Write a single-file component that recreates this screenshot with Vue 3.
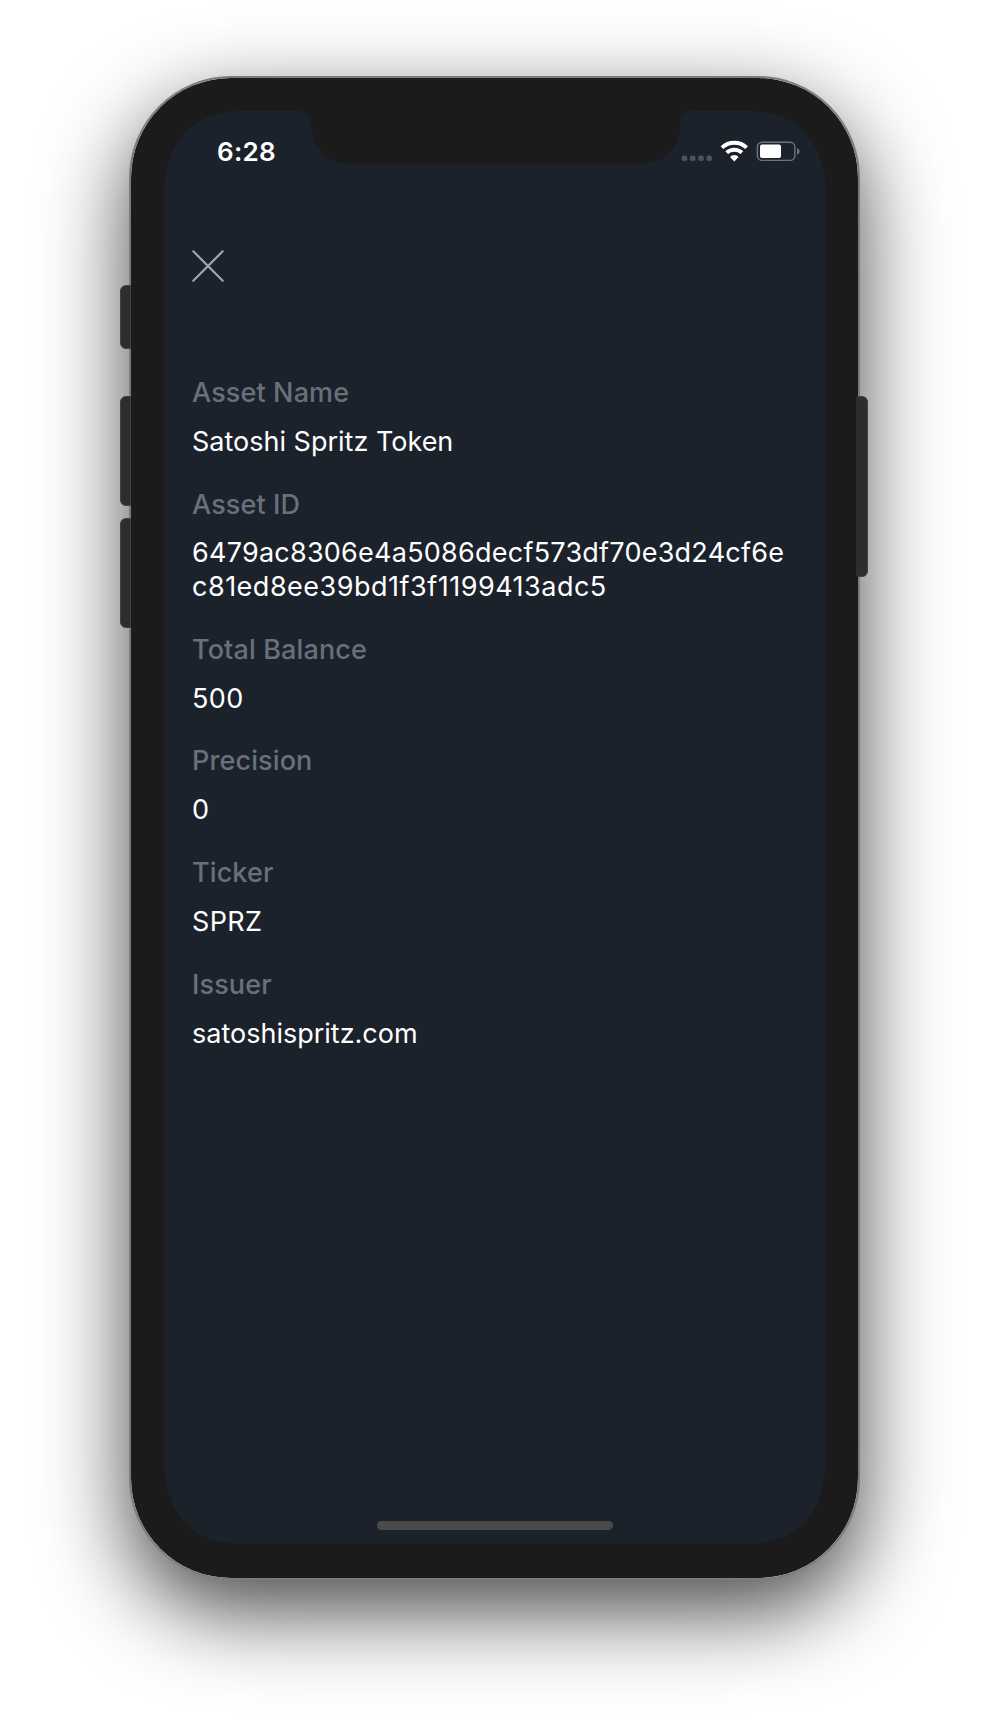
<script setup>
const fields = [
  { label: 'Asset Name', lines: ['Satoshi Spritz Token'], key: 'name' },
  { label: 'Asset ID', lines: ['6479ac8306e4a5086decf573df70e3d24cf6e', 'c81ed8ee39bd1f3f1199413adc5'], key: 'id' },
  { label: 'Total Balance', lines: ['500'], key: 'balance' },
  { label: 'Precision', lines: ['0'], key: 'precision' },
  { label: 'Ticker', lines: ['SPRZ'], key: 'ticker' },
  { label: 'Issuer', lines: ['satoshispritz.com'], key: 'issuer' },
]
</script>

<template>
  <main class="stage">
    <div class="phone">
      <i class="key mute"></i>
      <i class="key up"></i>
      <i class="key down"></i>
      <i class="key power"></i>
      <div class="body">
        <svg class="glass" width="662" height="1433" viewBox="0 0 662 1433" aria-hidden="true">
          <path
            fill="#1c222b"
            d="M74 0H137Q147.3 1 147.3 13C147.3 37 162 52.8 186 52.8H477C501 52.8 516 37 516 13Q516 1 526.5 0H588C637 3 659 31 662 80V1353C659 1402 637 1430 588 1433H74C25 1430 3 1402 0 1353V80C3 31 25 3 74 0Z"
          />
        </svg>
        <div class="screen">
          <header class="status">
            <span class="time">6:28</span>
            <svg class="indicators" width="118" height="24" viewBox="0 0 118 24" aria-hidden="true">
              <g fill="#4c535b">
                <rect x="0.8" y="15.6" width="5.4" height="5.4" rx="1.8" />
                <rect x="9" y="15.6" width="5.4" height="5.4" rx="1.8" />
                <rect x="17.3" y="15.6" width="5.4" height="5.4" rx="1.8" />
                <rect x="25.5" y="15.6" width="5.4" height="5.4" rx="1.8" />
              </g>
              <g fill="none" stroke="#fff" stroke-width="4">
                <path d="M41 7.6A18.1 18.1 0 0 1 65.6 7.6" />
                <path d="M45.7 12.6A11.2 11.2 0 0 1 60.9 12.6" />
              </g>
              <path fill="#fff" d="M49 16.9A6 6 0 0 1 57.6 16.9L53.8 20.9Q53.3 21.4 52.8 20.9Z" />
              <rect x="76.4" y="2.2" width="37.4" height="18.2" rx="4.7" fill="none" stroke="#6f747a" stroke-width="1.4" />
              <rect x="79" y="4.6" width="21" height="13.4" rx="2" fill="#fff" />
              <path fill="#6f747a" d="M116 8Q118.6 9.2 118.6 11.4T116 14.8Z" />
            </svg>
          </header>
          <button class="close" aria-label="Close">
            <svg width="32" height="32" viewBox="0 0 32 32">
              <path d="M1.3 1.3L30.7 30.7M30.7 1.3L1.3 30.7" stroke="#a3a6ab" stroke-width="2.2" stroke-linecap="round" />
            </svg>
          </button>
          <dl class="details">
            <div v-for="f in fields" :key="f.key" class="field" :class="f.key">
              <dt>{{ f.label }}</dt>
              <dd><span v-for="line in f.lines" :key="line">{{ line }}</span></dd>
            </div>
          </dl>
          <div class="home"></div>
        </div>
      </div>
    </div>
  </main>
</template>

<style>
body {
  margin: 0;
  background: #fff;
}
</style>

<style scoped>
.stage {
  box-sizing: border-box;
  width: 990px;
  height: 1728px;
  padding: 76px 0 0 129px;
  overflow: hidden;
  background: #fff;
  font-family: Inter, 'Liberation Sans', sans-serif;
}
.phone {
  position: relative;
  width: 731px;
  height: 1504px;
}
.key {
  position: absolute;
  z-index: 1;
  box-sizing: border-box;
  left: -9px;
  width: 11px;
  border: 1px solid #414141;
  border-radius: 6px 0 0 6px;
  background: #2d2d2d;
}
.mute { top: 209px; height: 64px; }
.up { top: 320px; height: 110px; }
.down { top: 442px; height: 110px; }
.power {
  left: auto;
  right: -8px;
  top: 320px;
  width: 12px;
  height: 181px;
  border-left: 0;
  border-radius: 4px 6px 6px 4px;
}
.body {
  position: relative;
  box-sizing: border-box;
  width: 731px;
  height: 1504px;
  padding: 33px 32px 33px 33px;
  border: 2px solid #7c7c7c;
  border-radius: 102px;
  background: #1b1b1b;
  background-clip: padding-box;
  box-shadow: 0 31px 86px rgba(0, 0, 0, 0.72);
}
.glass {
  position: absolute;
  left: 33px;
  top: 33px;
}
.screen {
  position: relative;
  box-sizing: border-box;
  display: flex;
  flex-direction: column;
  width: 662px;
  height: 1433px;
  padding: 29px 27px 14px 28px;
}
.status {
  display: flex;
  justify-content: space-between;
  align-items: flex-start;
  height: 24px;
  padding-left: 25px;
}
.time {
  color: #fff;
  font-size: 26px;
  font-weight: 600;
  line-height: 24px;
  letter-spacing: 0.3px;
}
.indicators {
  overflow: visible;
  flex: none;
}
.close {
  width: 32px;
  height: 32px;
  margin: 86px 0 0;
  padding: 0;
  border: 0;
  background: none;
}
.close svg { display: block; }
.details {
  display: flex;
  flex-direction: column;
  gap: 29px;
  margin: 94px 0 0;
  font-size: 27px;
  line-height: 33.7px;
}
.field {
  display: flex;
  flex-direction: column;
  gap: 15.2px;
}
dt {
  color: #69707a;
  font-weight: 500;
  letter-spacing: 0.12px;
}
dd {
  margin: 0;
  color: #fff;
  white-space: nowrap;
}
dd span { display: block; }
.id dd { letter-spacing: 0.24px; }
.id dd span + span { letter-spacing: 0.5px; }
.balance dd,
.precision dd,
.ticker dd { letter-spacing: 0.35px; }
.home {
  width: 236px;
  height: 9px;
  margin: auto auto 0 185px;
  border-radius: 5px;
  background: #4a4a4a;
}
</style>
